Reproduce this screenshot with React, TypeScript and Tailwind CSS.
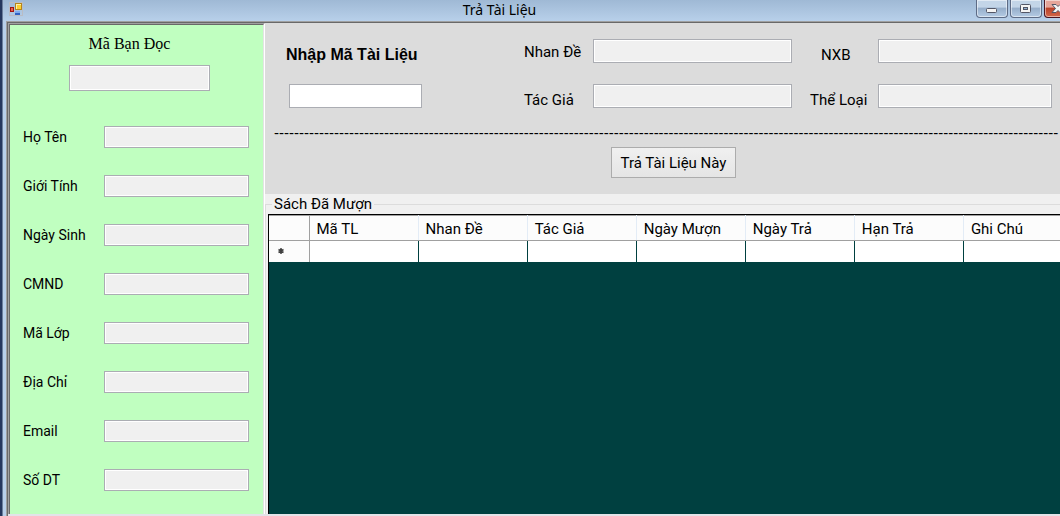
import React from 'react';

const readerFields = ['Họ Tên', 'Giới Tính', 'Ngày Sinh', 'CMND', 'Mã Lớp', 'Địa Chỉ', 'Email', 'Số DT'];
const columns = ['Mã TL', 'Nhan Đề', 'Tác Giả', 'Ngày Mượn', 'Ngày Trả', 'Hạn Trả', 'Ghi Chú'];

const readOnlyBox =
  'min-w-0 border border-[#abadb3] bg-[#f0f0f0] shadow-[inset_0_0_0_1px_#ffffff] outline-none px-1';

function AppIcon() {
  return (
    <svg width="14" height="14" viewBox="0 0 14 14" aria-hidden="true">
      <rect x="0.5" y="0.5" width="13" height="13" fill="none" stroke="#b9bcc4" />
      <rect x="1" y="5" width="4" height="5" fill="#a01410" />
      <rect x="2" y="6" width="2" height="3" fill="#e8604c" />
      <rect x="6" y="1" width="7" height="7" fill="#b5851a" />
      <rect x="7" y="2" width="5" height="5" fill="#fdd02f" />
      <path d="M7 2h5v1H8v4H7z" fill="#fff0a8" />
      <rect x="6" y="9" width="5" height="4" fill="#2f62c4" />
      <path d="M6 9h5v2H6z" fill="#7fabf0" />
    </svg>
  );
}

const captionButton =
  'flex h-[18px] w-8 shrink-0 items-start justify-center rounded-b-sm border border-t-0 border-[#5d6b85] bg-linear-to-b from-[#c3d5e8] from-40% via-[#97afcb] via-50% to-[#b4cbe4] shadow-[inset_0_0_0_1px_#ffffff80]';

function TitleBar() {
  return (
    <header className="flex h-[21px] shrink-0 items-start overflow-hidden bg-linear-to-b from-[#9fb9d5] to-[#b8d0ea]">
      <div className="flex flex-1 pl-1.5 pt-0.5">
        <AppIcon />
      </div>
      <h1 className="font-['Noto_Sans',sans-serif] text-[14px] leading-5 text-black">Trả Tài Liệu</h1>
      <div className="-mr-4 ml-[86px] flex flex-1 justify-end gap-0.5">
        <button type="button" aria-label="Thu nhỏ" className={captionButton}>
          <svg width="12" height="16" viewBox="0 0 12 16">
            <rect x="0.5" y="8.5" width="10" height="4" rx="1" fill="#f4f4f4" stroke="#535666" />
          </svg>
        </button>
        <button type="button" aria-label="Phóng to" className={captionButton}>
          <svg width="12" height="16" viewBox="0 0 12 16">
            <rect x="0.5" y="4.5" width="10" height="8" rx="1" fill="#f4f4f4" stroke="#535666" />
            <rect x="3.5" y="7.5" width="4" height="2" fill="#8fb0d0" stroke="#535666" />
          </svg>
        </button>
        <button
          type="button"
          aria-label="Đóng"
          className="flex h-[18px] w-8 shrink-0 items-start justify-center rounded-b-sm border border-t-0 border-[#4a1420] bg-linear-to-b from-[#e5a59a] from-40% via-[#bb4229] via-50% to-[#d2674a] pr-1 shadow-[inset_0_0_0_1px_#ffffff80]"
        >
          <svg width="14" height="16" viewBox="0 0 14 16">
            <path
              d="M1 4.500H5L7 6.500L9 4.500H13L9.500 8.500L13 12.500H9L7 10.500L5 12.500H1L4.500 8.500Z"
              fill="#f4f4f4"
              stroke="#535666"
            />
          </svg>
        </button>
      </div>
    </header>
  );
}

function ReaderPanel() {
  return (
    <aside className="flex w-[257px] shrink-0 border-l border-t border-r border-l-[#a0a0a0] border-t-[#a0a0a0] border-r-white">
      <div className="flex min-w-0 flex-1 flex-col border-l border-r border-t border-l-[#696969] border-t-[#696969] border-r-[#e3e3e3] bg-[#c0ffc0]">
        <div className="flex flex-col items-center pb-[35px] pl-1.5 pt-[9px]">
          <label
            htmlFor="reader-id"
            className="pr-5 font-['Liberation_Serif',serif] text-[16px] leading-5 text-black"
          >
            Mã Bạn Đọc
          </label>
          <input id="reader-id" readOnly className={`${readOnlyBox} mt-[11px] h-[26px] w-[141px]`} />
        </div>
        <div className="flex flex-col gap-[27px] pl-[13px] pr-3.5">
          {readerFields.map((name, i) => (
            <div key={name} className="flex h-[22px] items-center">
              <label htmlFor={`reader-${i}`} className="w-[81px] shrink-0 font-['Roboto',sans-serif] text-[14px] leading-5">
                {name}
              </label>
              <input id={`reader-${i}`} readOnly className={`${readOnlyBox} h-[22px] flex-1`} />
            </div>
          ))}
        </div>
      </div>
    </aside>
  );
}

function BookField({ id, label, labelClass }: { id: string; label: string; labelClass: string }) {
  return (
    <div className="flex h-6 items-center">
      <label htmlFor={id} className={`${labelClass} shrink-0`}>
        {label}
      </label>
      <input id={id} readOnly className={`${readOnlyBox} h-6 flex-1`} />
    </div>
  );
}

function ReturnPanel() {
  return (
    <section className="h-[171px] shrink-0 overflow-hidden bg-[#dcdcdc] text-[15px] leading-5">
      <div className="flex pl-[21px] pr-2 pt-4">
        <div className="flex w-[238px] shrink-0 flex-col items-start pt-1.5">
          <label htmlFor="doc-id" className="font-['Liberation_Sans',sans-serif] text-[16px] font-bold leading-5">
            Nhập Mã Tài Liệu
          </label>
          <input
            id="doc-id"
            className="ml-[3px] mt-[19px] h-6 w-[133px] border border-[#abadb3] bg-white px-1 outline-none"
          />
        </div>
        <div className="flex min-w-0 flex-[268] flex-col gap-[21px]">
          <BookField id="title" label="Nhan Đề" labelClass="w-[69px] pt-0.5" />
          <BookField id="author" label="Tác Giả" labelClass="w-[69px] pt-2" />
        </div>
        <div className="ml-[18px] flex min-w-0 flex-[242] flex-col gap-[21px]">
          <BookField id="publisher" label="NXB" labelClass="w-[68px] pl-[11px] pt-2" />
          <BookField id="category" label="Thể Loại" labelClass="w-[68px] pt-2" />
        </div>
      </div>
      <div
        aria-hidden="true"
        className="mt-[15px] overflow-hidden whitespace-nowrap pl-[9px] font-['Liberation_Sans',sans-serif]"
      >
        {'-'.repeat(157)}
      </div>
      <div className="flex justify-center pl-[22px] pt-1">
        <button
          type="button"
          className="h-[31px] border border-[#acacac] bg-linear-to-b from-[#f0f0f0] to-[#e5e5e5] px-[9px] text-[15px] leading-5"
        >
          Trả Tài Liệu Này
        </button>
      </div>
    </section>
  );
}

function BorrowedBooks() {
  return (
    <fieldset className="flex min-h-0 min-w-0 flex-1 flex-col overflow-hidden border-l border-t border-[#dcdcdc] text-[15px] leading-5">
      <legend className="ml-1.5 px-0.5">Sách Đã Mượn</legend>
      <div className="ml-0.5 h-full overflow-hidden border-l border-t border-black bg-[#004040]">
        <table className="w-[804px] table-fixed border-collapse">
          <colgroup>
            <col className="w-[40px]" />
            {columns.map((name) => (
              <col key={name} />
            ))}
          </colgroup>
          <thead>
            <tr className="h-[25px] bg-[#fcfcfc]">
              <th aria-label="Dòng" className="border border-l-0 border-[#a0a0a0]" />
              {columns.map((name) => (
                <th
                  key={name}
                  scope="col"
                  className="border-b border-r border-t border-b-[#a0a0a0] border-r-[#e3ecf6] border-t-[#a0a0a0] p-0 pl-[7px] pt-px text-left font-normal"
                >
                  {name}
                </th>
              ))}
            </tr>
          </thead>
          <tbody>
            <tr className="h-[21px] bg-white">
              <th scope="row" className="border-r border-r-[#a0a0a0] bg-[#fcfcfc] p-0">
                <svg width="6" height="6" viewBox="0 0 6 6" className="ml-[9px]" aria-label="Dòng mới">
                  <path d="M3 0V6M0.500 1.500L5.500 4.500M0.500 4.500L5.500 1.500" stroke="#404040" strokeWidth="1.5" />
                </svg>
              </th>
              {columns.map((name) => (
                <td key={name} className="border-r border-r-[#004040] p-0" />
              ))}
            </tr>
          </tbody>
        </table>
      </div>
    </fieldset>
  );
}

export default function App() {
  return (
    <div className="flex h-screen overflow-hidden bg-[#25375e] pl-0.5 font-['Roboto',sans-serif] text-black">
      <div className="flex min-w-0 flex-1 flex-col border-l border-[#6c7f9d]">
        <TitleBar />
        <div className="flex min-h-0 flex-1 bg-[#b8d0ea] pl-[3px]">
          <main className="flex min-w-0 flex-1 border-l border-t border-[#a0a0a0]">
            <div className="flex min-w-0 flex-1 border-l border-t border-[#696969] bg-[#f0f0f0]">
              <div className="flex min-w-0 flex-1 border-b-2 border-[#e3e3e8]">
                <ReaderPanel />
                <div className="flex min-w-0 flex-1 flex-col">
                  <ReturnPanel />
                  <BorrowedBooks />
                </div>
              </div>
            </div>
          </main>
        </div>
      </div>
    </div>
  );
}
